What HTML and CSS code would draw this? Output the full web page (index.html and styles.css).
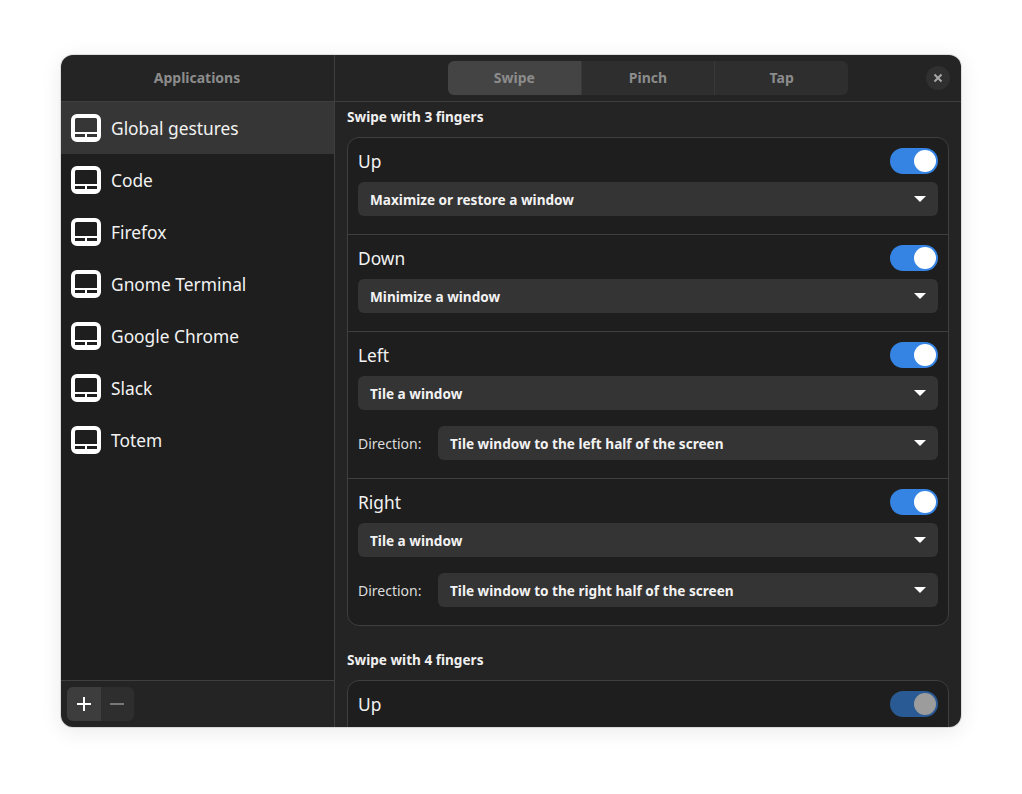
FILE: index.html
```html
<!DOCTYPE html>
<html lang="en">
<head>
<meta charset="utf-8">
<title>Touché</title>
<link rel="stylesheet" href="styles.css">
</head>
<body>
<svg class="defs" width="0" height="0" aria-hidden="true">
  <symbol id="pad" viewBox="0 0 30 28">
    <path fill-rule="evenodd" fill="currentColor" d="M6 0h18a6 6 0 0 1 6 6v16a6 6 0 0 1-6 6H6a6 6 0 0 1-6-6V6a6 6 0 0 1 6-6zM5.500 4A1.500 1.500 0 0 0 4 5.500V18h22V5.500A1.500 1.500 0 0 0 24.500 4zM4 20v3h10v-3zM16 20v3h10v-3z"/>
  </symbol>
  <symbol id="caret" viewBox="0 0 12 6">
    <path d="M0 0h12L6 6z" fill="currentColor"/>
  </symbol>
</svg>
<main class="window">
  <aside class="sidebar">
    <header class="side-head">Applications</header>
    <ul class="apps">
      <li class="app selected"><svg class="pad"><use href="#pad"/></svg>Global gestures</li>
      <li class="app"><svg class="pad"><use href="#pad"/></svg>Code</li>
      <li class="app"><svg class="pad"><use href="#pad"/></svg>Firefox</li>
      <li class="app"><svg class="pad"><use href="#pad"/></svg>Gnome Terminal</li>
      <li class="app"><svg class="pad"><use href="#pad"/></svg>Google Chrome</li>
      <li class="app"><svg class="pad"><use href="#pad"/></svg>Slack</li>
      <li class="app"><svg class="pad"><use href="#pad"/></svg>Totem</li>
    </ul>
    <footer class="side-foot">
      <div class="addrem">
        <button class="add" type="button"><svg width="16" height="16" viewBox="0 0 16 16"><path d="M7 1h2v14H7zM1 7h14v2H1z" fill="currentColor"/></svg></button>
        <button class="rem" type="button"><svg width="16" height="16" viewBox="0 0 16 16"><path d="M1 7h14v2H1z" fill="currentColor"/></svg></button>
      </div>
    </footer>
  </aside>
  <section class="content">
    <header class="top">
      <nav class="tabs">
        <span class="tab active">Swipe</span>
        <span class="tab">Pinch</span>
        <span class="tab">Tap</span>
      </nav>
      <button class="close" type="button"><svg width="10" height="10" viewBox="0 0 10 10"><path d="M1.500 1.500l7 7M8.500 1.500l-7 7" stroke="currentColor" stroke-width="2" fill="none"/></svg></button>
    </header>
    <div class="scroll">
      <h2 class="sec first">Swipe with 3 fingers</h2>
      <div class="card">
        <div class="row">
          <div class="line"><span class="name">Up</span><span class="switch"><i></i></span></div>
          <div class="select"><span>Maximize or restore a window</span><svg class="caret"><use href="#caret"/></svg></div>
        </div>
        <div class="row">
          <div class="line"><span class="name">Down</span><span class="switch"><i></i></span></div>
          <div class="select"><span>Minimize a window</span><svg class="caret"><use href="#caret"/></svg></div>
        </div>
        <div class="row">
          <div class="line"><span class="name">Left</span><span class="switch"><i></i></span></div>
          <div class="select"><span>Tile a window</span><svg class="caret"><use href="#caret"/></svg></div>
          <div class="dir"><span class="dir-label">Direction:</span><div class="select"><span>Tile window to the left half of the screen</span><svg class="caret"><use href="#caret"/></svg></div></div>
        </div>
        <div class="row">
          <div class="line"><span class="name">Right</span><span class="switch"><i></i></span></div>
          <div class="select"><span>Tile a window</span><svg class="caret"><use href="#caret"/></svg></div>
          <div class="dir"><span class="dir-label">Direction:</span><div class="select"><span>Tile window to the right half of the screen</span><svg class="caret"><use href="#caret"/></svg></div></div>
        </div>
      </div>
      <h2 class="sec">Swipe with 4 fingers</h2>
      <div class="card">
        <div class="row">
          <div class="line"><span class="name">Up</span><span class="switch dim"><i></i></span></div>
        </div>
      </div>
    </div>
  </section>
</main>
</body>
</html>
```
FILE: styles.css
```css
* { box-sizing: border-box; }
html, body { margin: 0; height: 100%; }
body {
  background: #fff;
  padding: 55px 61px 67px;
  font-family: "Noto Sans", "Open Sans", sans-serif;
  color: #fff;
  overflow: hidden;
}
.defs { position: absolute; }
.window {
  display: flex;
  width: 900px;
  height: 672px;
  border-radius: 12px;
  background: #242424;
  overflow: hidden;
  box-shadow: 0 0 0 1px rgba(0,0,0,.1), 0 4px 22px rgba(0,0,0,.09);
}
.sidebar {
  width: 274px;
  flex: none;
  display: flex;
  flex-direction: column;
  border-right: 1px solid #3f3f3f;
}
.side-head {
  height: 47px;
  flex: none;
  display: flex;
  align-items: center;
  justify-content: center;
  padding-bottom: 2px;
  padding-right: 1px;
  font-size: 14px;
  font-weight: 700;
  color: #8c8c8c;
  border-bottom: 1px solid #3f3f3f;
}
.apps {
  flex: 1;
  list-style: none;
  margin: 0;
  padding: 0;
  background: #1e1e1e;
}
.app {
  height: 52px;
  display: flex;
  align-items: center;
  gap: 10px;
  padding-left: 10px;
  font-size: 17.35px;
  color: #f2f2f2;
}
.app.selected { background: #363636; }
.pad { width: 30px; height: 28px; flex: none; color: #fff; }
.side-foot {
  height: 47px;
  flex: none;
  border-top: 1px solid #3f3f3f;
  padding: 6px;
}
.addrem { display: flex; width: 67px; height: 34px; border-radius: 6px; overflow: hidden; background: #2e2e2e; }
.addrem button {
  width: 34px;
  border: 0;
  padding: 0;
  background: none;
  display: flex;
  align-items: center;
  justify-content: center;
}
.addrem .add { background: #3d3d3d; color: #fff; }
.addrem .rem { width: 33px; padding-right: 1px; color: #787878; }
.content { flex: 1; min-width: 0; display: flex; flex-direction: column; }
.top {
  height: 47px;
  flex: none;
  position: relative;
  display: flex;
  justify-content: center;
  padding-top: 6px;
  border-bottom: 1px solid #3f3f3f;
}
.tabs { display: flex; width: 400px; height: 34px; border-radius: 6px; overflow: hidden; background: #2e2e2e; }
.tab {
  flex: 1;
  display: flex;
  align-items: center;
  justify-content: center;
  padding-bottom: 1px;
  font-size: 14px;
  font-weight: 700;
  color: #8c8c8c;
  border-left: 1px solid #383838;
}
.tab.active { background: #444; border-left: 0; }
.close {
  position: absolute;
  right: 11px;
  top: 11px;
  width: 24px;
  height: 24px;
  border: 0;
  padding: 0;
  border-radius: 50%;
  background: #303030;
  color: #a8a8a8;
  display: flex;
  align-items: center;
  justify-content: center;
}
.scroll { flex: 1; min-height: 0; overflow: hidden; padding: 0 12px; }
.sec {
  margin: 23px 0 11px;
  height: 20px;
  display: flex;
  align-items: center;
  font-size: 13.6px;
  font-weight: 700;
  color: #f0f0f0;
}
.sec.first { margin-top: 4px; }
.card {
  border: 1px solid #3f3f3f;
  border-radius: 12px;
  background: #1e1e1e;
}
.row { padding: 10px 10px 18px; border-bottom: 1px solid #3f3f3f; }
.row:last-child { border-bottom: 0; }
.line { display: flex; justify-content: space-between; align-items: center; height: 26px; margin-bottom: 8px; }
.name { font-size: 17.35px; color: #f2f2f2; }
.switch { width: 48px; height: 26px; border-radius: 13px; background: #3584e4; position: relative; }
.switch i { position: absolute; right: 2px; top: 2px; width: 22px; height: 22px; border-radius: 50%; background: #fff; }
.switch.dim { background: #2a5a94; }
.switch.dim i { background: #9c9c9c; }
.select {
  flex: 1;
  height: 34px;
  border-radius: 6px;
  background: #343434;
  display: flex;
  align-items: center;
  justify-content: space-between;
  padding: 0 12px;
  font-size: 13.6px;
  font-weight: 700;
  color: #f2f2f2;
}
.caret { width: 12px; height: 6px; color: #fff; flex: none; }
.dir { display: flex; align-items: center; margin-top: 16px; }
.dir-label { width: 80px; flex: none; font-size: 14px; color: #dcdcdc; }
```
